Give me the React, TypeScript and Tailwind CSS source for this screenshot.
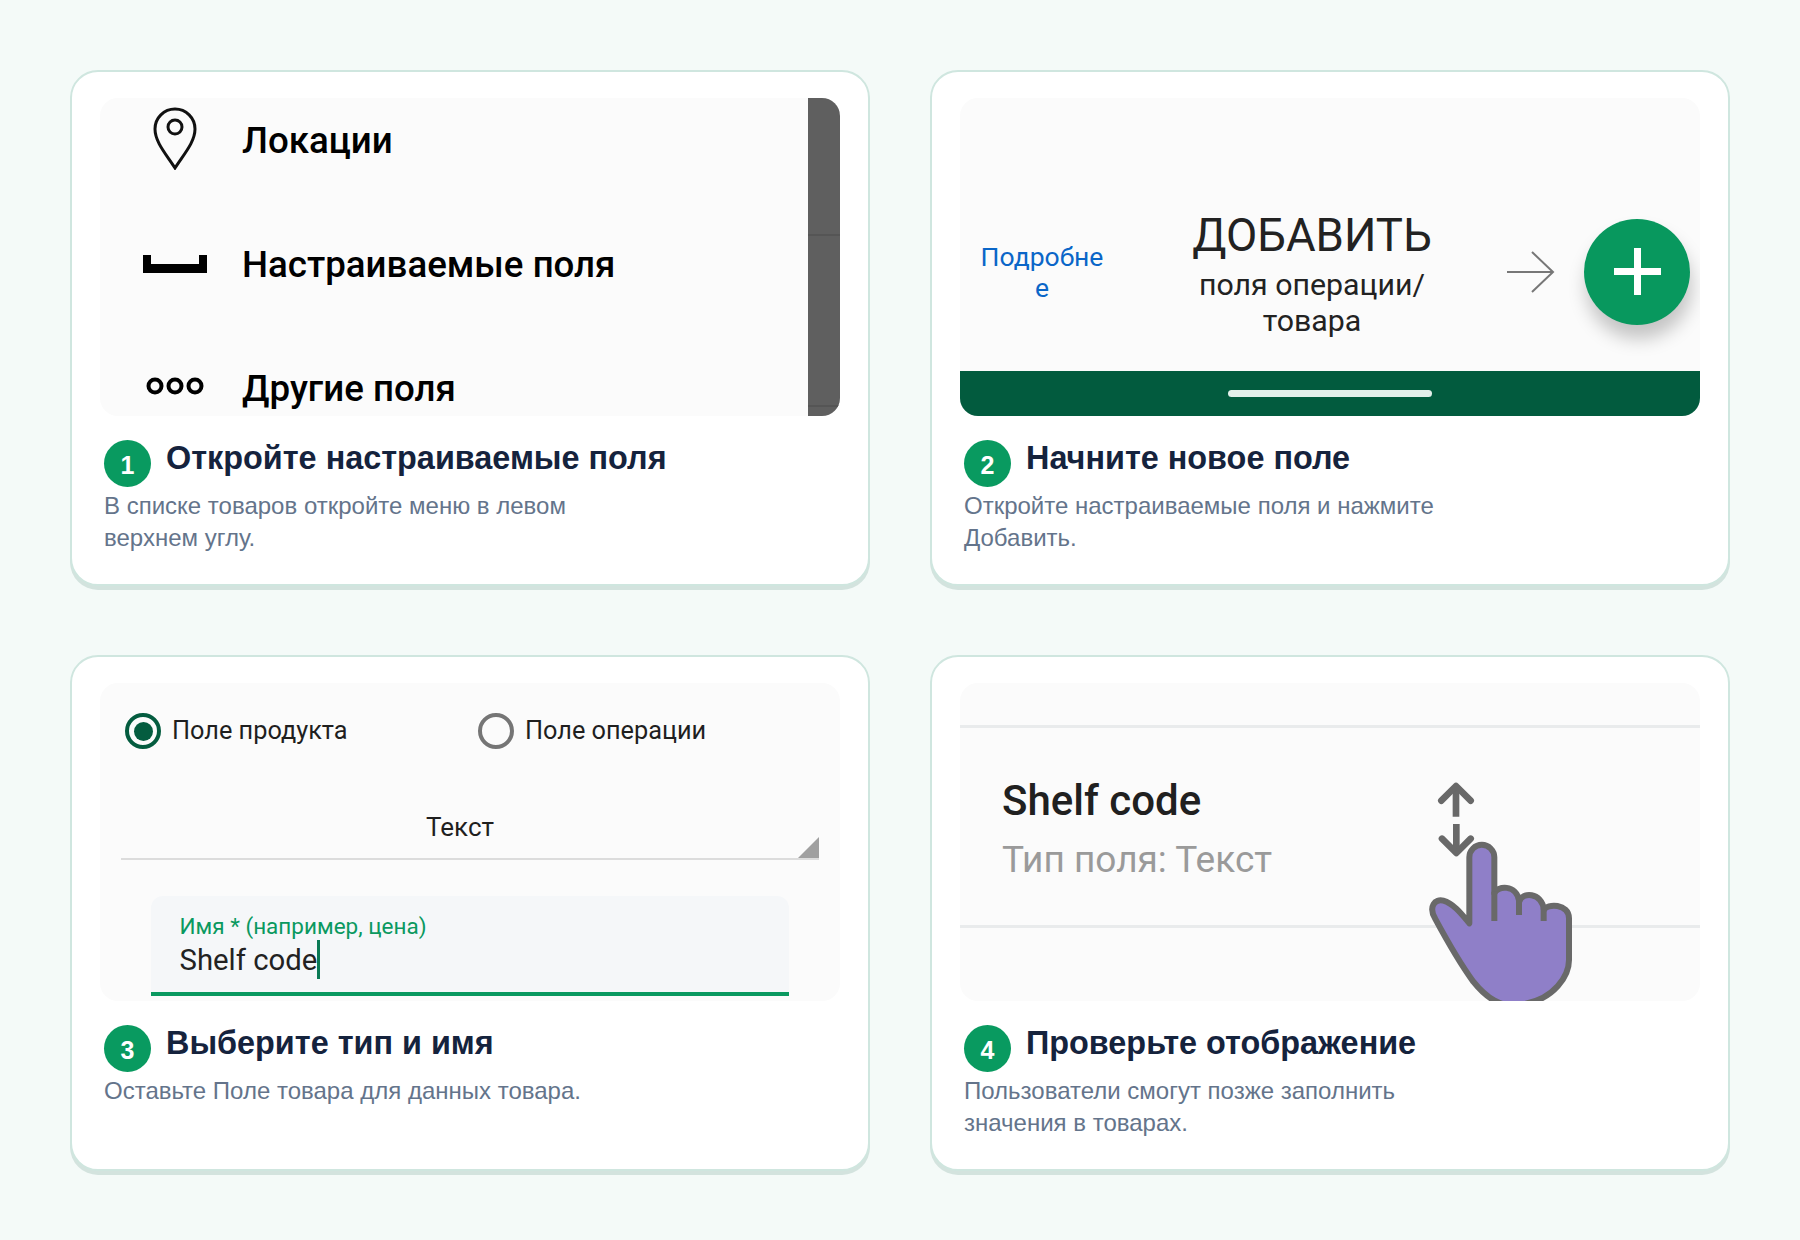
const font = "font-['Roboto',sans-serif]";

const MenuRow = ({ icon, label, className }: { icon: React.ReactNode; label: string; className: string }) => (
  <div className={`flex items-center ${className}`}>
    <div className="flex w-[142px] shrink-0 justify-center pl-[7px]">{icon}</div>
    <span className="text-[36.7px] leading-[44px] font-medium text-black">{label}</span>
  </div>
);

const Step = ({ n, title, children }: { n: number; title: string; children: React.ReactNode }) => (
  <div className="mt-[24px] px-[4px] font-['Liberation_Sans',Arial,sans-serif]">
    <div className="flex items-start gap-[15px]">
      <span className="flex h-[47px] w-[47px] shrink-0 items-center justify-center rounded-full bg-[#099a60] pt-[4px] text-[25px] font-bold text-white">
        {n}
      </span>
      <h3 className="-mt-[3px] text-[32.4px] leading-[42px] font-bold text-[#15233d]">{title}</h3>
    </div>
    <p className="mt-[3px] max-w-[500px] text-[24px] leading-[32px] text-[#64748b]">{children}</p>
  </div>
);

const Card = ({ panel, children }: { panel: React.ReactNode; children: React.ReactNode }) => (
  <div className="h-[516px] rounded-[28px] border-2 border-[#cfe6df] bg-white px-[28px] pt-[26px] shadow-[0_4px_0_#d3e3de]">
    {panel}
    {children}
  </div>
);

const panelClass = "relative h-[318px] overflow-hidden rounded-[18px] bg-[#fbfbfb]";

const LocationsPanel = () => (
  <div className={`${panelClass} flex`}>
    <div className="flex-1 pt-[21px]">
      <MenuRow
        label="Локации"
        className="h-[44px]"
        icon={
          <svg width="46" height="64" viewBox="0 0 46 64" fill="none" stroke="#111" strokeWidth="3" className="-mt-[6px]">
            <path d="M23 62C14 48 3 36 3 23a20 20 0 0 1 40 0c0 13-11 25-20 39z" />
            <circle cx="23" cy="21" r="7" />
          </svg>
        }
      />
      <MenuRow
        label="Настраиваемые поля"
        className="mt-[80px] h-[44px]"
        icon={
          <svg width="64" height="18" viewBox="0 0 64 18" fill="#000" className="-mt-[2px]">
            <path d="M0 0h8v9h48V0h8v18H0z" />
          </svg>
        }
      />
      <MenuRow
        label="Другие поля"
        className="mt-[80px] h-[44px]"
        icon={
          <svg width="58" height="18" viewBox="0 0 58 18" fill="none" stroke="#000" strokeWidth="4" className="-mt-[6px]">
            <circle cx="9" cy="9" r="6.5" />
            <circle cx="29" cy="9" r="6.5" />
            <circle cx="49" cy="9" r="6.5" />
          </svg>
        }
      />
    </div>
    <div className="flex w-[32px] flex-col bg-[#5f5f5f] pt-[136px]">
      <div className="h-[2px] bg-[#555]" />
      <div className="mt-[169px] h-[2px] bg-[#555]" />
    </div>
  </div>
);

const AddPanel = () => (
  <div className={`${panelClass} flex flex-col`}>
    <div className="flex flex-1 items-center pt-[80px]">
      <div className="-mt-[5px] w-[205px] shrink-0 pl-[18px] pr-[59px] text-center text-[26.5px] leading-[31px] break-all text-[#0a66c8]">
        Подробне
        <br />е
      </div>
      <div className="-mt-[2px] w-[291px] shrink-0 pl-[3px] text-center text-[#222]">
        <div className="text-[45.5px] leading-[56px]">ДОБАВИТЬ</div>
        <div className="mt-[3px] text-[30.3px] leading-[36px]">
          поля операции/
          <br />
          товара
        </div>
      </div>
      <svg width="50" height="44" viewBox="0 0 50 44" fill="none" stroke="#777" strokeWidth="2" className="ml-[50px] mt-[-5px] shrink-0">
        <path d="M1 22h46M26 2l21 20-21 20" />
      </svg>
      <div className="ml-[28px] -mt-[6px] flex h-[106px] w-[106px] shrink-0 items-center justify-center rounded-full bg-[#08985e] shadow-[2px_14px_18px_rgba(0,0,0,0.22)]">
        <svg width="47" height="47" viewBox="0 0 47 47" fill="#fff">
          <path d="M20 0h7v20h20v7H27v20h-7V27H0v-7h20z" />
        </svg>
      </div>
    </div>
    <div className="flex h-[45px] shrink-0 items-center justify-center bg-[#025b3e]">
      <div className="h-[7px] w-[204px] rounded-full bg-[#e3efea]" />
    </div>
  </div>
);

const Radio = ({ checked, label, className }: { checked?: boolean; label: string; className: string }) => (
  <div className={`flex items-center gap-[11px] ${className}`}>
    <span
      className={`flex h-[36px] w-[36px] items-center justify-center rounded-full border-[4px] ${
        checked ? "border-[#045c3f]" : "border-[#757575]"
      }`}
    >
      {checked && <span className="h-[19px] w-[19px] rounded-full bg-[#045c3f]" />}
    </span>
    <span className="text-[25.3px] leading-[36px] text-[#1f1f1f]">{label}</span>
  </div>
);

const FormPanel = () => (
  <div className={`${panelClass} pt-[30px]`}>
    <div className="flex pl-[25px]">
      <Radio checked label="Поле продукта" className="w-[353px]" />
      <Radio label="Поле операции" className="" />
    </div>
    <div className="relative mx-[21px] mt-[58px] flex h-[53px] items-start justify-center border-b-2 border-[#dcdcdc]">
      <span className="pr-[20px] text-[26px] leading-[40px] text-[#1f1f1f]">Текст</span>
      <svg width="21" height="21" viewBox="0 0 21 21" className="absolute right-0 bottom-0">
        <path d="M21 0v21H0z" fill="#a0a0a0" />
      </svg>
    </div>
    <div className="ml-[50.5px] mt-[36px] h-[100px] w-[638.5px] rounded-t-[12px] border-b-[4px] border-[#0a9960] bg-[#f5f7f9] pl-[29px] pt-[16px]">
      <div className="text-[22.5px] leading-[28px] text-[#0a9960]">Имя * (например, цена)</div>
      <div className="flex items-center text-[29.3px] leading-[36px] text-[#222]">
        Shelf code
        <span className="h-[39px] w-[3px] bg-[#0a7a55]" />
      </div>
    </div>
  </div>
);

const PreviewPanel = () => (
  <div className={panelClass}>
    <div className="mt-[42px] h-[3px] bg-[#e9ebec]" />
    <div className="pl-[42px] pt-[47px]">
      <div className="text-[42px] leading-[52px] font-medium text-[#202020]">Shelf code</div>
      <div className="mt-[9px] text-[37px] leading-[48px] text-[#9a9a9a]">Тип поля: Текст</div>
    </div>
    <div className="mt-[41px] h-[3px] bg-[#e9ebec]" />
    <svg width="220" height="250" viewBox="0 0 660 750" fill="none" className="absolute left-[420px] top-[77px]">
      <g stroke="#696969" strokeWidth="20" strokeLinejoin="round">
        <path d="M228 170V85M229 192v80" />
        <path d="M184 122l44-44 44 44M186 236l43 43 43-43" strokeLinecap="round" />
      </g>
      <path
        d="M268 490V292A37 37 0 0 1 343 292V400C350 378 410 370 418 425C425 395 485 395 492 450C500 430 567 430 567 475V600C567 650 520 715 440 730L420 740C360 740 320 715 280 665C240 610 200 540 165 475C145 440 165 415 190 422C220 430 245 462 268 490Z"
        fill="#8a7ac6"
        fillOpacity="0.96"
        stroke="#696969"
        strokeWidth="18"
        strokeLinejoin="round"
      />
      <path d="M343 395v88M417 420v45M491 445v38" stroke="#696969" strokeWidth="18" />
    </svg>
  </div>
);

export default function App() {
  return (
    <div className={`${font} h-[1240px] bg-[#f4faf8] px-[70px] pt-[70px]`}>
      <div className="grid grid-cols-2 gap-x-[60px] gap-y-[69px]">
        <Card panel={<LocationsPanel />}>
          <Step n={1} title="Откройте настраиваемые поля">
            В списке товаров откройте меню в левом верхнем углу.
          </Step>
        </Card>
        <Card panel={<AddPanel />}>
          <Step n={2} title="Начните новое поле">
            Откройте настраиваемые поля и нажмите Добавить.
          </Step>
        </Card>
        <Card panel={<FormPanel />}>
          <Step n={3} title="Выберите тип и имя">
            Оставьте Поле товара для данных товара.
          </Step>
        </Card>
        <Card panel={<PreviewPanel />}>
          <Step n={4} title="Проверьте отображение">
            Пользователи смогут позже заполнить значения в товарах.
          </Step>
        </Card>
      </div>
    </div>
  );
}
